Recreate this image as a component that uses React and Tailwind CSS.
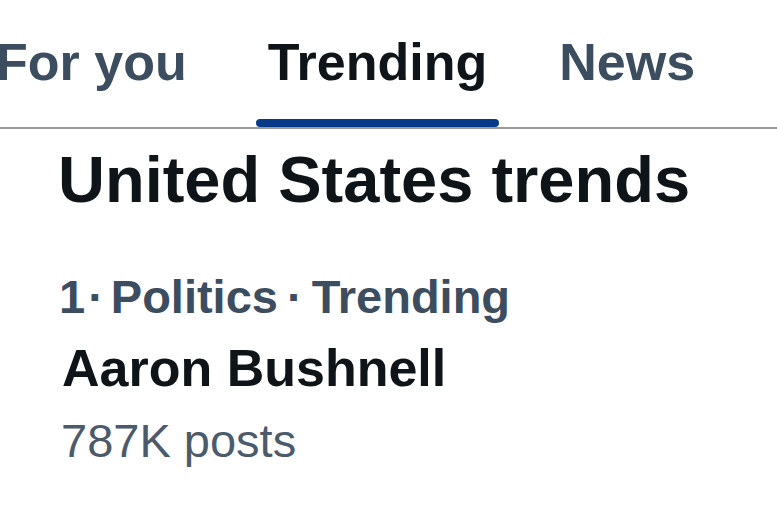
import React from 'react';

const TABS = [
  { label: 'For you', active: false },
  { label: 'Trending', active: true },
  { label: 'News', active: false },
];

const Tab = ({ label, active, className = '' }) => (
  <div className={`flex flex-col ${className}`}>
    <div
      className={`px-[12px] pt-[36px] h-[119px] text-[52px] leading-[52px] font-bold whitespace-nowrap ${
        active ? 'text-[#0f1419]' : 'text-[#3c4d5f]'
      }`}
    >
      {label}
    </div>
    <div className={`h-[8px] rounded-full ${active ? 'bg-[#073b8a]' : 'bg-transparent'}`} />
  </div>
);

export default function App() {
  return (
    <div
      className="w-[777px] h-[506px] overflow-hidden bg-white"
      style={{ fontFamily: '"Liberation Sans", Arial, sans-serif' }}
    >
      {/* tab bar */}
      <div className="flex">
        <Tab {...TABS[0]} className="ml-[-16px]" />
        <Tab {...TABS[1]} className="ml-[57px]" />
        <Tab {...TABS[2]} className="ml-[48px]" />
      </div>
      <div className="h-[2px] bg-[#9a9a9a]" />

      {/* trends */}
      <div className="pl-[58px]">
        <h1 className="mt-[18px] text-[65px] leading-[65px] font-bold text-[#0f1419] whitespace-nowrap">
          United States trends
        </h1>

        <div className="mt-[61px] ml-[1px] flex text-[47px] leading-[47px] font-bold text-[#3c4d5f] whitespace-nowrap">
          <span>1</span>
          <span className="ml-[3px]">·</span>
          <span className="ml-[7px]">Politics</span>
          <span className="ml-[9px]">·</span>
          <span className="ml-[9px]">Trending</span>
        </div>

        <div className="mt-[22px] ml-[4px] text-[52px] leading-[52px] font-bold text-[#0f1419] whitespace-nowrap">
          Aaron Bushnell
        </div>

        <div className="mt-[23px] ml-[3px] text-[47px] leading-[47px] text-[#4b5b6b] whitespace-nowrap">
          787K posts
        </div>
      </div>
    </div>
  );
}
